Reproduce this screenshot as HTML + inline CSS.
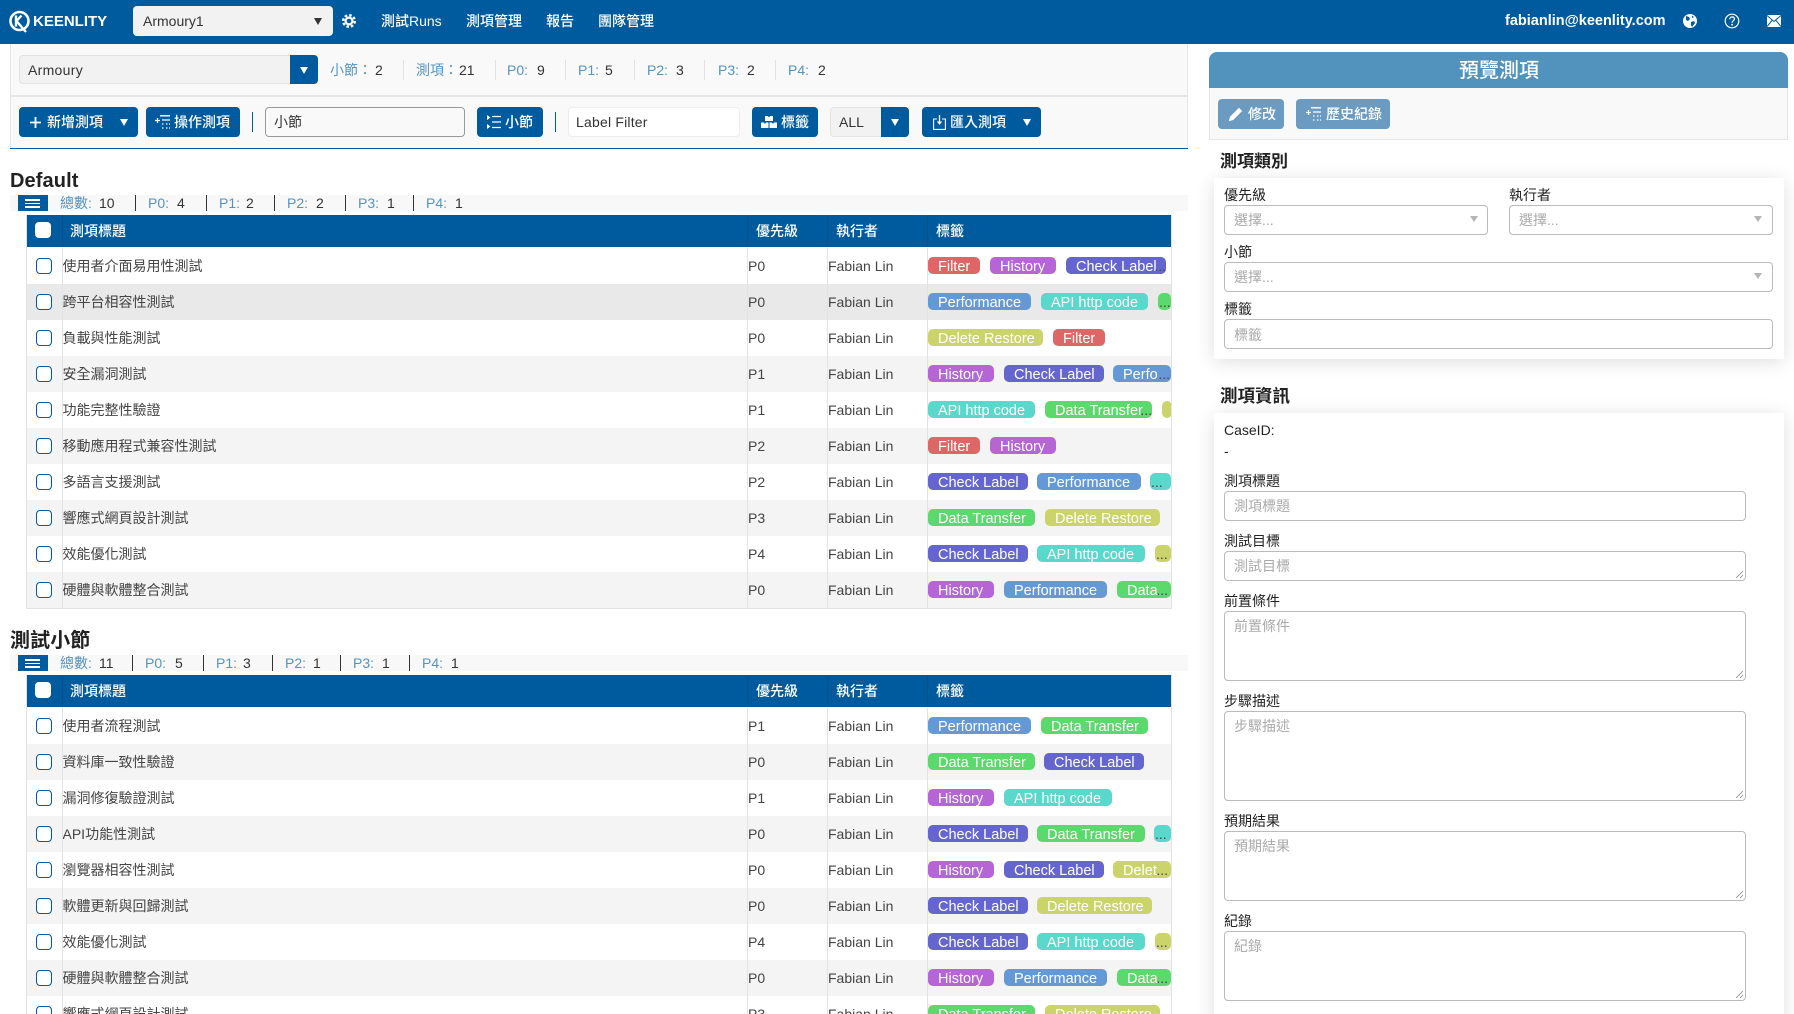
<!DOCTYPE html>
<html lang="zh-Hant"><head><meta charset="utf-8"><title>Keenlity</title>
<style>
*{box-sizing:border-box;margin:0;padding:0}
html,body{width:1794px;height:1014px;overflow:hidden;background:#fff}
body{position:relative;font-family:"Liberation Sans","Noto Sans CJK TC",sans-serif;font-size:14px;color:#333}
.x{position:absolute;white-space:nowrap;line-height:20px}
.b{position:absolute}
svg{position:absolute;display:block}
.nav{color:#fff;font-weight:500;top:11px}
.btn{position:absolute;background:#005a9e;border-radius:4px;height:30px;color:#fff}
.btn span,.lb{position:absolute;top:5px;line-height:20px;white-space:nowrap;font-weight:500}
.car{position:absolute;width:0;height:0;border-left:4.5px solid transparent;border-right:4.5px solid transparent;border-top:7px solid #fff}
.sk{color:#5593c0}
.vd{position:absolute;width:1px;background:#e2e2e2;top:60px;height:20px}
.sd{position:absolute;width:1px;background:#333;height:16px}
.h1{font-size:20px;font-weight:700;color:#222;letter-spacing:.1px}
.th{position:absolute;left:27px;width:1144px;height:32px;background:#005a9e}
.th span{position:absolute;top:6px;line-height:20px;color:#fff;font-weight:500}
.th u{position:absolute;top:0;height:32px;width:1px;background:#0a5189}
.th i{position:absolute;left:8px;top:7px;width:16px;height:16px;border-radius:4px;background:#fff}
.r{position:absolute;left:27px;width:1144px;height:36px;background:#fff}
.r.g{background:#f4f4f4}.r.hv{background:#e9e9e9}
.r>i{position:absolute;left:9px;top:10px;width:16px;height:16px;border:1.4px solid #005a9e;border-radius:4px;background:#fff}
.r>b{position:absolute;left:35.5px;top:8px;line-height:20px;font-weight:400;color:#444;white-space:nowrap}
.r>s{position:absolute;top:8px;line-height:20px;font-size:14px;text-decoration:none;color:#444;white-space:nowrap}
.r>s.p{left:721px}.r>s.n{left:801px}
.tg{position:absolute;left:901px;top:0;width:243px;height:36px;overflow:hidden}
.t{position:absolute;top:9px;height:17px;border-radius:5px;color:#fff;font-size:14.5px;line-height:20px;padding-left:10px;white-space:nowrap;overflow:hidden}
.F{background:#dd6666;width:52px}.H{background:#b565d6;width:66px}.C{background:#6565d0;width:100px}.P{background:#6499d6;width:103px}.A{background:#5ad8cc;width:107px}.D{background:#5cd96c;width:107px}.R{background:#cbd46a;width:115px}
.e{position:absolute;right:0;top:0;color:#444;line-height:19px;font-size:14px}
.vl{position:absolute;width:1px;background:#e3e3e3}
.card{position:absolute;left:1214px;width:570px;background:#fff;box-shadow:0 3px 18px rgba(0,0,0,.13)}
.lab{color:#222;left:1224px}
.f{position:absolute;border:1px solid #bbb;border-radius:4px;background:#fff;color:#aaa;line-height:20px;padding:4px 9px;white-space:nowrap}
.sc{position:absolute;width:0;height:0;border-left:4px solid transparent;border-right:4px solid transparent;border-top:6px solid #b5b5b5}
.rz{right:1px;bottom:1px}
.rb{position:absolute;top:99px;height:30px;background:#6b9bc0;border-radius:4px;color:#fff}
</style></head><body>

<!-- nav -->
<div class="b" style="left:0;top:0;width:1794px;height:44px;background:#005a9e"></div>
<svg style="left:8px;top:9px" width="24" height="26" viewBox="0 0 24 26"><circle cx="11.5" cy="12" r="9" fill="none" stroke="#fff" stroke-width="2.6"/><path d="M8 6.5v11M8.5 12l5-5.5M8.5 12l6 7 3.5 4" fill="none" stroke="#fff" stroke-width="2.4"/></svg>
<div class="x" style="left:33px;top:11.500px;color:#fff;font-weight:700;font-size:15px">KEENLITY</div>
<div class="b" style="left:133px;top:6px;width:200px;height:30px;background:#f2f2f2;border-radius:4px"></div>
<div class="x" style="left:143px;top:11px;color:#333">Armoury1</div>
<div class="car" style="left:314px;top:18px;border-top-color:#333"></div>
<svg style="left:342px;top:14px" width="14" height="14" viewBox="0 0 14 14"><circle cx="7" cy="7" r="5.8" fill="none" stroke="#fff" stroke-width="2.4" stroke-dasharray="2.6 1.95"/><circle cx="7" cy="7" r="3.4" fill="none" stroke="#fff" stroke-width="2.2"/></svg>
<div class="x nav" style="left:381px">測試Runs</div>
<div class="x nav" style="left:466px">測項管理</div>
<div class="x nav" style="left:546px">報告</div>
<div class="x nav" style="left:598px">團隊管理</div>
<div class="x" style="left:1505px;top:11px;color:#fff;font-weight:700;font-size:14.5px">fabianlin@keenlity.com</div>
<svg style="left:1683px;top:14px" width="14" height="14" viewBox="0 0 14 14"><circle cx="7" cy="7" r="7" fill="#fff"/><path d="M3 2l3 1 1 2-2 2-2-1zM8 8l3-1 1 2-3 4-1-2z M9 1.500l2 1.500-2 1z" fill="#005a9e"/></svg>
<svg style="left:1724px;top:13px" width="16" height="16" viewBox="0 0 16 16"><circle cx="8" cy="8" r="6.800" fill="none" stroke="#fff" stroke-width="1.200"/><path d="M5.800 6.200c0-3 4.600-3 4.600-.2 0 1.800-2.300 1.800-2.300 3.700" fill="none" stroke="#fff" stroke-width="1.300"/><circle cx="8.100" cy="11.700" r=".9" fill="#fff"/></svg>
<svg style="left:1767px;top:15px" width="14" height="12" viewBox="0 0 14 12"><rect width="14" height="12" fill="#fff"/><path d="M0 .5l7 6 7-6M0 11.500l5-6M14 11.500l-5-6" fill="none" stroke="#005a9e" stroke-width="1"/></svg>

<!-- left top bars -->
<div class="b" style="left:10px;top:44px;width:1178px;height:105px;background:#f9f9f9;border-left:1px solid #e6e6e6;border-right:1px solid #e6e6e6"></div>
<div class="b" style="left:10px;top:95px;width:1178px;height:2px;background:#e5e5e5"></div>
<div class="b" style="left:10px;top:148px;width:1178px;height:1px;background:#005a9e"></div>

<div class="b" style="left:19px;top:55px;width:299px;height:29px;background:#f2f2f2;border:1px solid #e2e2e2;border-radius:4px"></div>
<div class="b" style="left:290px;top:55px;width:28px;height:29px;background:#005a9e;border-radius:0 4px 4px 0"></div>
<div class="car" style="left:299.500px;top:67px"></div>
<div class="x" style="left:28px;top:60px;letter-spacing:.3px">Armoury</div>

<div class="x sk" style="left:330px;top:60px">小節：</div><div class="x" style="left:375px;top:60px">2</div><div class="vd" style="left:403px"></div>
<div class="x sk" style="left:416px;top:60px">測項：</div><div class="x" style="left:459px;top:60px">21</div><div class="vd" style="left:495px"></div>
<div class="x sk" style="left:507px;top:60px">P0:</div><div class="x" style="left:537px;top:60px">9</div><div class="vd" style="left:565px"></div>
<div class="x sk" style="left:578px;top:60px">P1:</div><div class="x" style="left:605px;top:60px">5</div><div class="vd" style="left:634px"></div>
<div class="x sk" style="left:647px;top:60px">P2:</div><div class="x" style="left:676px;top:60px">3</div><div class="vd" style="left:704px"></div>
<div class="x sk" style="left:718px;top:60px">P3:</div><div class="x" style="left:747px;top:60px">2</div><div class="vd" style="left:775px"></div>
<div class="x sk" style="left:788px;top:60px">P4:</div><div class="x" style="left:818px;top:60px">2</div>

<!-- toolbar -->
<div class="btn" style="left:19px;top:107px;width:119px"><span style="left:28px">新增測項</span>
<svg style="left:11px;top:9.500px" width="11" height="11" viewBox="0 0 11 11"><path d="M5.500 0v11M0 5.500h11" stroke="#fff" stroke-width="1.800"/></svg><div class="car" style="left:101px;top:12px"></div></div>
<div class="btn" style="left:146px;top:107px;width:94px"><span style="left:28px">操作測項</span>
<svg style="left:9px;top:8px" width="15" height="14" viewBox="0 0 15 14"><path d="M5 .8h10M0 5.500h5M2.500 3v5M7 5h8M7 9h1.500M11 9h1.500M14 9h1M7 13h1.500M11 13h1.500M14 13h1" stroke="#fff" stroke-width="1.300" fill="none"/></svg></div>
<div class="b" style="left:252px;top:112px;width:1px;height:20px;background:#005a9e"></div>
<div class="b" style="left:265px;top:107px;width:200px;height:30px;background:#f9f9f9;border:1px solid #999;border-radius:4px"></div>
<div class="x" style="left:274px;top:112px">小節</div>
<div class="btn" style="left:477px;top:107px;width:66px"><span style="left:28px">小節</span>
<svg style="left:10px;top:8px" width="14" height="14" viewBox="0 0 14 14"><path d="M5 1.500h9M5 7h9M5 12.500h9" stroke="#fff" stroke-width="1.300"/><path d="M0 0l3.500 2.500L0 5zM0 9l3.500 2.500L0 14z" fill="#fff"/></svg></div>
<div class="b" style="left:555px;top:112px;width:1px;height:20px;background:#005a9e"></div>
<div class="b" style="left:568px;top:107px;width:172px;height:30px;background:#fff;border:1px solid #eee;border-radius:4px"></div>
<div class="x" style="left:576px;top:112px;letter-spacing:.2px">Label Filter</div>
<div class="btn" style="left:752px;top:107px;width:66px"><span style="left:29px">標籤</span>
<svg style="left:9px;top:9px" width="16" height="12" viewBox="0 0 16 12"><path d="M4 0h3l.5 1h1L9 0h3v5H4zM0 6.500h3l.5 1h1l.5-1h2.500V12H0zM8.500 6.500H11l.5 1h1l.5-1h3V12H8.500z" fill="#fff"/></svg></div>
<div class="b" style="left:830px;top:107px;width:79px;height:30px;background:#f2f2f2;border:1px solid #e4e4e4;border-radius:4px"></div>
<div class="b" style="left:881px;top:107px;width:28px;height:30px;background:#005a9e;border-radius:0 4px 4px 0"></div>
<div class="car" style="left:890.500px;top:119px"></div>
<div class="x" style="left:839px;top:112px">ALL</div>
<div class="btn" style="left:922px;top:107px;width:119px"><span style="left:28px">匯入測項</span>
<svg style="left:11px;top:8px" width="13" height="15" viewBox="0 0 13 15"><path d="M4 4H.6v10.400h11.800V4H9" fill="none" stroke="#fff" stroke-width="1.100"/><path d="M6.500 0v8" stroke="#fff" stroke-width="1.300"/><path d="M3.800 6.500h5.400L6.500 10z" fill="#fff"/></svg><div class="car" style="left:101px;top:12px"></div></div>

<!-- section 1 -->
<div class="x h1" style="left:10px;top:171px">Default</div>
<div class="b" style="left:10px;top:195px;width:1178px;height:16px;background:#f8f8f8"></div>
<div class="b" style="left:18px;top:195px;width:30px;height:16px;background:#005a9e"></div>
<div class="b" style="left:25px;top:199px;width:15px;height:1.500px;background:#fff"></div><div class="b" style="left:25px;top:202.500px;width:15px;height:1.500px;background:#fff"></div><div class="b" style="left:25px;top:206px;width:15px;height:1.500px;background:#fff"></div>
<div class="x sk" style="left:60px;top:193px">總數:</div><div class="x" style="left:99px;top:193px">10</div><div class="sd" style="left:135px;top:195px"></div>
<div class="x sk" style="left:148px;top:193px">P0:</div><div class="x" style="left:177px;top:193px">4</div><div class="sd" style="left:206px;top:195px"></div>
<div class="x sk" style="left:219px;top:193px">P1:</div><div class="x" style="left:246px;top:193px">2</div><div class="sd" style="left:274px;top:195px"></div>
<div class="x sk" style="left:287px;top:193px">P2:</div><div class="x" style="left:316px;top:193px">2</div><div class="sd" style="left:345px;top:195px"></div>
<div class="x sk" style="left:358px;top:193px">P3:</div><div class="x" style="left:387px;top:193px">1</div><div class="sd" style="left:413px;top:195px"></div>
<div class="x sk" style="left:426px;top:193px">P4:</div><div class="x" style="left:455px;top:193px">1</div>

<div class="th" style="top:215px"><i></i><u style="left:35px"></u><span style="left:43px">測項標題</span><u style="left:720px"></u><span style="left:729px">優先級</span><u style="left:800px"></u><span style="left:809px">執行者</span><u style="left:900px"></u><span style="left:909px">標籤</span></div>

<div class="r" style="top:248px"><i></i><b>使用者介面易用性測試</b><s class="p">P0</s><s class="n">Fabian Lin</s><div class="tg"><div class="t F" style="left:0">Filter</div><div class="t H" style="left:62px">History</div><div class="t C" style="left:138px">Check Label<span class="e">...</span></div></div></div>
<div class="r hv" style="top:284px"><i></i><b>跨平台相容性測試</b><s class="p">P0</s><s class="n">Fabian Lin</s><div class="tg"><div class="t P" style="left:0">Performance</div><div class="t A" style="left:113px">API http code</div><div class="t D" style="left:230px;padding:0;width:13px"><span class="e" style="left:1px">...</span></div></div></div>
<div class="r" style="top:320px"><i></i><b>負載與性能測試</b><s class="p">P0</s><s class="n">Fabian Lin</s><div class="tg"><div class="t R" style="left:0">Delete Restore</div><div class="t F" style="left:125px">Filter</div></div></div>
<div class="r g" style="top:356px"><i></i><b>安全漏洞測試</b><s class="p">P1</s><s class="n">Fabian Lin</s><div class="tg"><div class="t H" style="left:0">History</div><div class="t C" style="left:76px">Check Label</div><div class="t P" style="left:185px;width:58px">Perfo<span class="e" style="right:1px">...</span></div></div></div>
<div class="r" style="top:392px"><i></i><b>功能完整性驗證</b><s class="p">P1</s><s class="n">Fabian Lin</s><div class="tg"><div class="t A" style="left:0">API http code</div><div class="t D" style="left:117px">Data Transfer<span class="e">...</span></div><div class="t R" style="left:234px;width:9px"></div></div></div>
<div class="r g" style="top:428px"><i></i><b>移動應用程式兼容性測試</b><s class="p">P2</s><s class="n">Fabian Lin</s><div class="tg"><div class="t F" style="left:0">Filter</div><div class="t H" style="left:62px">History</div></div></div>
<div class="r" style="top:464px"><i></i><b>多語言支援測試</b><s class="p">P2</s><s class="n">Fabian Lin</s><div class="tg"><div class="t C" style="left:0">Check Label</div><div class="t P" style="left:109px;width:104px">Performance</div><div class="t A" style="left:222px;width:21px;padding:0"><span class="e" style="left:1px">...</span></div></div></div>
<div class="r g" style="top:500px"><i></i><b>響應式網頁設計測試</b><s class="p">P3</s><s class="n">Fabian Lin</s><div class="tg"><div class="t D" style="left:0">Data Transfer</div><div class="t R" style="left:117px">Delete Restore</div></div></div>
<div class="r" style="top:536px"><i></i><b>效能優化測試</b><s class="p">P4</s><s class="n">Fabian Lin</s><div class="tg"><div class="t C" style="left:0">Check Label</div><div class="t A" style="left:109px;width:108px">API http code</div><div class="t R" style="left:227px;width:16px;padding:0"><span class="e" style="left:1px">...</span></div></div></div>
<div class="r g" style="top:572px"><i></i><b>硬體與軟體整合測試</b><s class="p">P0</s><s class="n">Fabian Lin</s><div class="tg"><div class="t H" style="left:0">History</div><div class="t P" style="left:76px">Performance</div><div class="t D" style="left:189px;width:54px">Data<span class="e" style="right:3px">...</span></div></div></div>

<div class="vl" style="left:62px;top:248px;height:360px"></div><div class="vl" style="left:747px;top:248px;height:360px"></div><div class="vl" style="left:827px;top:248px;height:360px"></div><div class="vl" style="left:927px;top:248px;height:360px"></div>
<div class="vl" style="left:26px;top:215px;height:394px"></div><div class="vl" style="left:1171px;top:215px;height:394px"></div>
<div class="b" style="left:26px;top:608px;width:1146px;height:1px;background:#e3e3e3"></div>

<!-- section 2 -->
<div class="x h1" style="left:10px;top:631px">測試小節</div>
<div class="b" style="left:10px;top:655px;width:1178px;height:16px;background:#f8f8f8"></div>
<div class="b" style="left:18px;top:655px;width:30px;height:16px;background:#005a9e"></div>
<div class="b" style="left:25px;top:659px;width:15px;height:1.500px;background:#fff"></div><div class="b" style="left:25px;top:662.500px;width:15px;height:1.500px;background:#fff"></div><div class="b" style="left:25px;top:666px;width:15px;height:1.500px;background:#fff"></div>
<div class="x sk" style="left:60px;top:653px">總數:</div><div class="x" style="left:99px;top:653px">11</div><div class="sd" style="left:132px;top:655px"></div>
<div class="x sk" style="left:145px;top:653px">P0:</div><div class="x" style="left:175px;top:653px">5</div><div class="sd" style="left:203px;top:655px"></div>
<div class="x sk" style="left:216px;top:653px">P1:</div><div class="x" style="left:243px;top:653px">3</div><div class="sd" style="left:272px;top:655px"></div>
<div class="x sk" style="left:285px;top:653px">P2:</div><div class="x" style="left:313px;top:653px">1</div><div class="sd" style="left:340px;top:655px"></div>
<div class="x sk" style="left:353px;top:653px">P3:</div><div class="x" style="left:382px;top:653px">1</div><div class="sd" style="left:409px;top:655px"></div>
<div class="x sk" style="left:422px;top:653px">P4:</div><div class="x" style="left:451px;top:653px">1</div>

<div class="th" style="top:675px"><i></i><u style="left:35px"></u><span style="left:43px">測項標題</span><u style="left:720px"></u><span style="left:729px">優先級</span><u style="left:800px"></u><span style="left:809px">執行者</span><u style="left:900px"></u><span style="left:909px">標籤</span></div>

<div class="r" style="top:708px"><i></i><b>使用者流程測試</b><s class="p">P1</s><s class="n">Fabian Lin</s><div class="tg"><div class="t P" style="left:0">Performance</div><div class="t D" style="left:113px">Data Transfer</div></div></div>
<div class="r g" style="top:744px"><i></i><b>資料庫一致性驗證</b><s class="p">P0</s><s class="n">Fabian Lin</s><div class="tg"><div class="t D" style="left:0">Data Transfer</div><div class="t C" style="left:116px">Check Label</div></div></div>
<div class="r" style="top:780px"><i></i><b>漏洞修復驗證測試</b><s class="p">P1</s><s class="n">Fabian Lin</s><div class="tg"><div class="t H" style="left:0">History</div><div class="t A" style="left:76px;width:108px">API http code</div></div></div>
<div class="r g" style="top:816px"><i></i><b>API功能性測試</b><s class="p" style="left:721px">P0</s><s class="n">Fabian Lin</s><div class="tg"><div class="t C" style="left:0">Check Label</div><div class="t D" style="left:109px;width:108px">Data Transfer</div><div class="t A" style="left:226px;width:17px;padding:0"><span class="e" style="left:1px">...</span></div></div></div>
<div class="r" style="top:852px"><i></i><b>瀏覽器相容性測試</b><s class="p">P0</s><s class="n">Fabian Lin</s><div class="tg"><div class="t H" style="left:0">History</div><div class="t C" style="left:76px">Check Label</div><div class="t R" style="left:185px;width:58px">Delet<span class="e" style="right:3px">...</span></div></div></div>
<div class="r g" style="top:888px"><i></i><b>軟體更新與回歸測試</b><s class="p">P0</s><s class="n">Fabian Lin</s><div class="tg"><div class="t C" style="left:0">Check Label</div><div class="t R" style="left:109px">Delete Restore</div></div></div>
<div class="r" style="top:924px"><i></i><b>效能優化測試</b><s class="p">P4</s><s class="n">Fabian Lin</s><div class="tg"><div class="t C" style="left:0">Check Label</div><div class="t A" style="left:109px;width:108px">API http code</div><div class="t R" style="left:227px;width:16px;padding:0"><span class="e" style="left:1px">...</span></div></div></div>
<div class="r g" style="top:960px"><i></i><b>硬體與軟體整合測試</b><s class="p">P0</s><s class="n">Fabian Lin</s><div class="tg"><div class="t H" style="left:0">History</div><div class="t P" style="left:76px">Performance</div><div class="t D" style="left:189px;width:54px">Data<span class="e" style="right:3px">...</span></div></div></div>
<div class="r" style="top:996px"><i></i><b>響應式網頁設計測試</b><s class="p">P3</s><s class="n">Fabian Lin</s><div class="tg"><div class="t D" style="left:0">Data Transfer</div><div class="t R" style="left:117px">Delete Restore</div></div></div>

<div class="vl" style="left:62px;top:708px;height:306px"></div><div class="vl" style="left:747px;top:708px;height:306px"></div><div class="vl" style="left:827px;top:708px;height:306px"></div><div class="vl" style="left:927px;top:708px;height:306px"></div>
<div class="vl" style="left:26px;top:675px;height:339px"></div><div class="vl" style="left:1171px;top:675px;height:339px"></div>

<!-- right cards (shadows first) -->
<div class="card" style="top:178px;height:181px"></div>
<div class="card" style="top:413px;height:640px"></div>

<!-- right panel header -->
<div class="b" style="left:1209px;top:52px;width:579px;height:36px;background:#5293be;border-radius:8px 8px 0 0"></div>
<div class="x" style="left:1459px;top:59px;width:80px;font-size:20px;line-height:24px;color:#fff;font-weight:500">預覽測項</div>
<div class="b" style="left:1209px;top:88px;width:579px;height:52px;background:#f9f9f9;border:1px solid #e5e5e5;border-top:0"></div>
<div class="rb" style="left:1218px;width:66px"><span class="lb" style="left:30px">修改</span>
<svg style="left:10px;top:8px" width="15" height="15" viewBox="0 0 15 15"><path d="M11 .8l3.200 3.200-9 9L.8 14.200 2 9.800z" fill="#fff"/></svg></div>
<div class="rb" style="left:1296px;width:94px"><span class="lb" style="left:30px">歷史紀錄</span>
<svg style="left:10px;top:8px" width="15" height="14" viewBox="0 0 15 14"><path d="M5 .8h10M0 5.500h5M2.500 3v5M7 5h8M7 9h1.500M11 9h1.500M14 9h1M7 13h1.500M11 13h1.500M14 13h1" stroke="#fff" stroke-width="1.300" fill="none"/></svg></div>

<div class="x" style="left:1220px;top:152px;font-size:17px;font-weight:700;color:#222">測項類別</div>
<div class="x" style="left:1220px;top:386px;font-size:17.500px;font-weight:700;color:#222">測項資訊</div>

<!-- form 1 -->
<div class="x lab" style="top:185px">優先級</div>
<div class="x lab" style="top:185px;left:1509px">執行者</div>
<div class="f" style="left:1224px;top:205px;width:264px;height:30px">選擇...</div><div class="sc" style="left:1470px;top:216px"></div>
<div class="f" style="left:1509px;top:205px;width:264px;height:30px">選擇...</div><div class="sc" style="left:1754px;top:216px"></div>
<div class="x lab" style="top:242px">小節</div>
<div class="f" style="left:1224px;top:262px;width:549px;height:30px">選擇...</div><div class="sc" style="left:1754px;top:273px"></div>
<div class="x lab" style="top:299px">標籤</div>
<div class="f" style="left:1224px;top:319px;width:549px;height:30px;padding-top:5px">標籤</div>

<!-- form 2 -->
<div class="x lab" style="top:420px">CaseID:</div>
<div class="x lab" style="top:441px">-</div>
<div class="x lab" style="top:471px">測項標題</div>
<div class="f" style="left:1224px;top:491px;width:522px;height:30px">測項標題</div>
<div class="x lab" style="top:531px">測試目標</div>
<div class="f" style="left:1224px;top:551px;width:522px;height:30px">測試目標<svg class="rz" width="9" height="9" viewBox="0 0 9 9"><path d="M1 8l7-7M5 8l3-3" stroke="#888" stroke-width=".8"/></svg></div>
<div class="x lab" style="top:591px">前置條件</div>
<div class="f" style="left:1224px;top:611px;width:522px;height:70px">前置條件<svg class="rz" width="9" height="9" viewBox="0 0 9 9"><path d="M1 8l7-7M5 8l3-3" stroke="#888" stroke-width=".8"/></svg></div>
<div class="x lab" style="top:691px">步驟描述</div>
<div class="f" style="left:1224px;top:711px;width:522px;height:90px">步驟描述<svg class="rz" width="9" height="9" viewBox="0 0 9 9"><path d="M1 8l7-7M5 8l3-3" stroke="#888" stroke-width=".8"/></svg></div>
<div class="x lab" style="top:811px">預期結果</div>
<div class="f" style="left:1224px;top:831px;width:522px;height:70px">預期結果<svg class="rz" width="9" height="9" viewBox="0 0 9 9"><path d="M1 8l7-7M5 8l3-3" stroke="#888" stroke-width=".8"/></svg></div>
<div class="x lab" style="top:911px">紀錄</div>
<div class="f" style="left:1224px;top:931px;width:522px;height:70px">紀錄<svg class="rz" width="9" height="9" viewBox="0 0 9 9"><path d="M1 8l7-7M5 8l3-3" stroke="#888" stroke-width=".8"/></svg></div>

</body></html>
